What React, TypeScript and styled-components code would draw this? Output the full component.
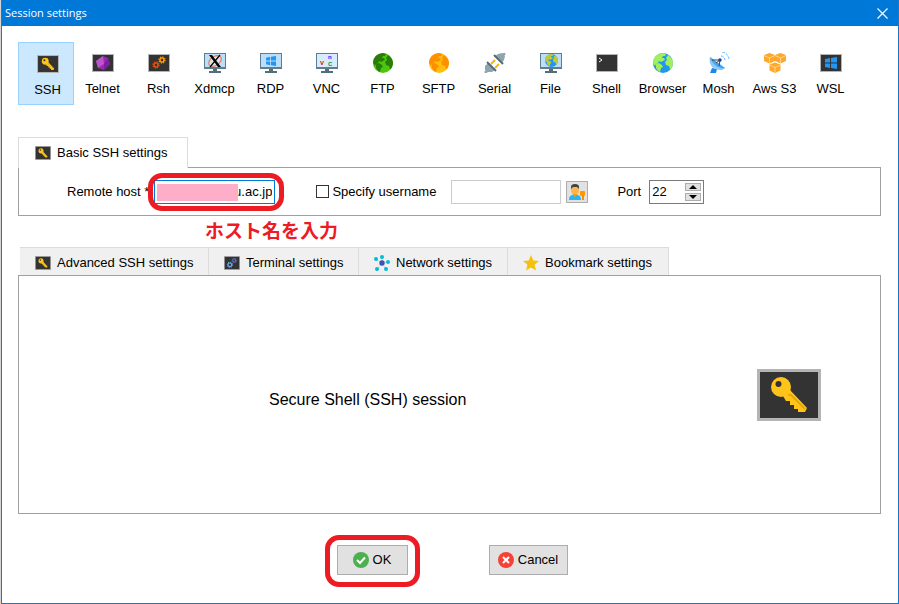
import React, { useState } from "react";
import styled, { createGlobalStyle } from "styled-components";

const GlobalStyle = createGlobalStyle`
  *, *::before, *::after { box-sizing: border-box; }
  body {
    margin: 0;
    background: #d4d4d4;
    color: #000;
    font: 13px/16px "Liberation Sans", Arial, sans-serif;
  }
  button, input { font: inherit; color: inherit; margin: 0; }
  svg { display: block; flex: none; }
`;

const Window = styled.div`
  display: flex;
  flex-direction: column;
  min-height: 100vh;
  margin-left: 1px;
  border: 1px solid #1979ca;
  border-top: 0;
  background: #fff;
`;

const TitleBar = styled.header`
  display: flex;
  align-items: center;
  justify-content: space-between;
  height: 26px;
  padding: 0 8px 0 3px;
  background: #0078d7;
  color: #fff;
`;

const Title = styled.h1`
  margin: 0;
  font: 400 11px/16px "Open Sans", "Noto Sans", sans-serif;
`;

const CloseButton = styled.button`
  padding: 2px;
  border: 0;
  background: none;
`;

const Toolbar = styled.nav`
  display: flex;
  padding: 16px 16px 0;
`;

const ToolButton = styled.button<{ $selected?: boolean }>`
  display: flex;
  flex-direction: column;
  align-items: center;
  gap: 8px;
  width: 56px;
  height: 63px;
  padding: ${(p) => (p.$selected ? "11px 0 0 3px" : "10px 0 0 1px")};
  border: 1px solid ${(p) => (p.$selected ? "#99d1ff" : "transparent")};
  background: ${(p) => (p.$selected ? "#cce8ff" : "transparent")};
  white-space: nowrap;
`;

const ToolIcon = styled.span`
  display: flex;
  align-items: center;
  justify-content: center;
  width: 22px;
  height: 20px;
`;

const Main = styled.main`
  display: flex;
  flex: 1;
  flex-direction: column;
  padding: 32px 17px 0 16px;
`;

const BasicTab = styled.button`
  position: relative;
  z-index: 1;
  display: flex;
  align-items: center;
  align-self: flex-start;
  gap: 6px;
  height: 31px;
  margin-bottom: -1px;
  padding: 0 19px 0 16px;
  border: 1px solid #dcdcdc;
  border-bottom: 0;
  background: #fff;
`;

const BasicPanel = styled.section`
  display: flex;
  align-items: center;
  height: 49px;
  padding-left: 48px;
  border: 1px solid #a0a0a0;
`;

const Field = styled.div`
  display: flex;
  align-items: center;
  gap: 8px;
`;

const HostField = styled(Field)`
  gap: 5px;
`;

const HostBox = styled.div`
  position: relative;
`;

const HostInput = styled.input`
  display: block;
  width: 121px;
  height: 24px;
  padding: 0 2px;
  border: 1px solid #0078d7;
  outline: 0;
  background: #fff;
  text-align: right;
`;

const Redaction = styled.span`
  position: absolute;
  top: 4px;
  left: 3px;
  width: 81px;
  height: 17px;
  background: #ffaec9;
`;

const Ring = styled.span<{ $inset: string }>`
  position: absolute;
  inset: ${(p) => p.$inset};
  border: 5px solid #ed1c24;
  border-radius: 14px;
  pointer-events: none;
`;

const UserField = styled(Field)`
  gap: 5px;
  margin-left: 41px;
`;

const CheckLabel = styled.label`
  display: flex;
  align-items: center;
  gap: 3px;
  width: 130px;
  white-space: nowrap;
`;

const Checkbox = styled.input`
  flex: none;
  width: 13px;
  height: 13px;
  border: 1px solid #333;
  background: #fff;
  appearance: none;
  &:checked { box-shadow: inset 0 0 0 2px #fff; background: #333; }
`;

const UserInput = styled.input`
  width: 110px;
  height: 24px;
  padding: 0 3px;
  border: 1px solid #ccc;
  background: #fff;
`;

const UserButton = styled.button`
  display: flex;
  align-items: center;
  justify-content: center;
  width: 22px;
  height: 22px;
  padding: 0;
  border: 1px solid #adadad;
  background: #e1e1e1;
`;

const PortField = styled(Field)`
  margin-left: 29px;
`;

const PortBox = styled.div`
  display: flex;
  align-items: center;
  width: 55px;
  height: 24px;
  padding-right: 2px;
  border: 1px solid #7a7a7a;
`;

const PortInput = styled.input`
  flex: 1;
  min-width: 0;
  height: 20px;
  padding: 0 2px;
  border: 0;
  outline: 0;
  background: none;
`;

const Spinner = styled.div`
  display: flex;
  flex-direction: column;
  gap: 2px;
`;

const SpinButton = styled.button`
  display: flex;
  align-items: center;
  justify-content: center;
  width: 16px;
  height: 8px;
  padding: 0;
  border: 1px solid #adadad;
  background: #e1e1e1;
`;

const Note = styled.p`
  margin: 2px 0 0 187px;
  color: #ed1c24;
  font: 700 19px/24px "Noto Sans CJK JP", sans-serif;
`;

const TabRow = styled.div`
  display: grid;
  grid-template-columns: 189px 150px 149px 161px;
  height: 28px;
  margin: 5px 0 0 2px;
`;

const Tab = styled.button`
  display: flex;
  align-items: center;
  gap: 6px;
  padding: 2px 0 0 15px;
  border: 1px solid #dcdcdc;
  border-width: 1px 1px 0 0;
  background: #f0f0f0;
  white-space: nowrap;
`;

const SessionPanel = styled.section`
  display: flex;
  flex: 1;
  align-items: center;
  justify-content: space-between;
  padding: 0 59px 0 250px;
  border: 1px solid #a0a0a0;
`;

const SessionText = styled.p`
  margin: 0;
  padding-top: 10px;
  font-size: 16px;
  line-height: 20px;
`;

const Footer = styled.footer`
  display: flex;
  align-items: flex-start;
  justify-content: center;
  gap: 81px;
  height: 89px;
  padding: 31px 0 0 4px;
`;

const ButtonBox = styled.div`
  position: relative;
`;

const DialogButton = styled.button<{ $width: number }>`
  display: flex;
  align-items: center;
  justify-content: center;
  gap: 4px;
  width: ${(p) => p.$width}px;
  height: 30px;
  padding: 0;
  border: 1px solid #adadad;
  background: #e1e1e1;
`;

const KeyIcon = ({ width, height }: { width: number; height: number }) => (
  <svg width={width} height={height} viewBox="0 0 64 52" preserveAspectRatio="none" aria-hidden>
    <rect width="64" height="52" fill="#b4b4b4" />
    <rect x="3" y="3" width="58" height="46" fill="#333" />
    <path d="M26 27L33 21 50 39 48 43H41V40H37V36H33V32H29Z" fill="#ffc31a" />
    <circle cx="24" cy="18" r="10" fill="#ffc31a" />
    <path d="M31 26L34 26 48 40" fill="none" stroke="#e0a106" strokeWidth="1.6" />
    <circle cx="21.5" cy="15" r="3" fill="#333" />
  </svg>
);

const Screen = ({ children }: { children?: React.ReactNode }) => (
  <svg width="22" height="20" viewBox="0 0 22 20" aria-hidden>
    <rect y="1" width="22" height="18" fill="#b4b4b4" />
    <rect x="1" y="2" width="20" height="16" fill="#333" />
    {children}
  </svg>
);

const Monitor = ({ children }: { children?: React.ReactNode }) => (
  <svg width="22" height="20" viewBox="0 0 22 20" aria-hidden>
    <path d="M0 0H22V16H0Z" fill="#607d8b" />
    <path d="M1 1H21V14H1Z" fill="#bbdefb" />
    <path d="M9 16H13V18H17V20H5V18H9Z" fill="#546e7a" />
    {children}
  </svg>
);

const Gear = ({ x, y, r, color }: { x: number; y: number; r: number; color: string }) => (
  <g transform={`translate(${x} ${y})`} fill="none" stroke={color}>
    <circle r={r} strokeWidth="1.5" />
    <circle r={r + 1} strokeWidth="1.4" strokeDasharray={`${(r + 1) * 0.393} ${(r + 1) * 0.393}`} />
  </g>
);

const GlobeShape = ({ sea, land }: { sea: string; land: string }) => (
  <>
    <circle cx="10" cy="10" r="10" fill={sea} />
    <path
      d="M4 2C6 1 8 0 10 0L13 1 12 3 10 3 9 5 11 5 12 7 10 8 8 9 6 8 5 10 3 11 2 13 0 10C0 7 1 4 4 2ZM3 11L6 10 9 12 10 14 8 15 7 19C5 18 4 17 3 15ZM15 2C18 4 20 7 20 10C20 12 19 14 18 16L17 16 16 13 13 12 12 9 14 7 13 5Z"
      fill={land}
    />
  </>
);

const Globe = (p: { sea: string; land: string }) => (
  <svg width="20" height="20" viewBox="0 0 20 20" aria-hidden>
    <GlobeShape {...p} />
  </svg>
);

const WindowsLogo = ({ x, y, size }: { x: number; y: number; size: number }) => (
  <svg x={x} y={y} width={size} height={size} viewBox="0 0 12 12">
    <path d="M0 2L5 1V5.5H0ZM6 1L12 0V5.5H6ZM0 6.5H5V11L0 10ZM6 6.5H12V12L6 11Z" fill="#2196f3" />
  </svg>
);

const SerialIcon = () => (
  <svg width="22" height="20" viewBox="0 0 22 20" aria-hidden>
    <path d="M1 20L4 17M18 3L21 0" stroke="#90a4ae" strokeWidth="2.5" />
    <path d="M4 10L11 17 8 19 3 19 1 17 1 13Z" fill="#90a4ae" />
    <path d="M11 3L18 10 20 7 21 3 18 0 14 1Z" fill="#90a4ae" />
    <path d="M3 9L12 18M10 2L19 11" stroke="#546e7a" strokeWidth="2" />
    <path d="M7 11L11 7M11 15L15 11" stroke="#ffb300" strokeWidth="2" />
  </svg>
);

const MoshIcon = () => (
  <svg width="22" height="22" viewBox="0 0 22 22" aria-hidden>
    <path d="M4 16L9 17 8 21H2Z" fill="#1e88e5" />
    <path d="M2 5C0 11 4 19 14 18L17 16Z" fill="#90caf9" />
    <path d="M2 5L17 16C13 18 3 12 2 5Z" fill="#42a5f5" />
    <path d="M4 8L12 8 11 14M12 8L8 11" fill="none" stroke="#37474f" />
    <circle cx="12" cy="8" r="1.7" fill="#0d47a1" />
    <path d="M13 4Q16 4 17 8M14 0Q20 1 21 7" fill="none" stroke="#64b5f6" strokeDasharray="3 1" />
  </svg>
);

const Cube = ({ x, y }: { x: number; y: number }) => (
  <g transform={`translate(${x} ${y})`}>
    <path d="M5.5 0L11 2V8L5.5 10.5 0 8V2Z" fill="#ffa726" />
    <path d="M0 2.5L5.5 5 11 2.5M5.5 5V10" fill="none" stroke="#ffe0b2" strokeWidth="0.8" />
  </g>
);

const AwsIcon = () => (
  <svg width="22" height="20" viewBox="0 0 22 20" aria-hidden>
    <Cube x={0} y={0} />
    <Cube x={11} y={0} />
    <Cube x={5.5} y={9.5} />
  </svg>
);

const XLogo = () => (
  <Monitor>
    <circle cx="11" cy="8" r="6" fill="#dfe6ea" />
    <ellipse cx="11" cy="8" rx="7" ry="4.5" transform="rotate(-35 11 8)" fill="none" stroke="#e77a55" strokeWidth="1.2" />
    <path d="M5 2H8L17 14H14Z" fill="#000" />
    <path d="M16 2L6 14" stroke="#000" strokeWidth="1.2" />
  </Monitor>
);

const VncIcon = () => (
  <Monitor>
    <path d="M1 1H21V14H1Z" fill="#d6ecfd" />
    <g fontFamily="Liberation Sans" fontSize="6" fontWeight="700">
      <text x="4" y="12" fill="#e00000">V</text>
      <text x="12" y="6" fill="#1a1aff">n</text>
      <text x="12" y="13" fill="#009030">C</text>
    </g>
  </Monitor>
);

const sessions: { name: string; icon: React.ReactNode }[] = [
  { name: "SSH", icon: <KeyIcon width={22} height={18} /> },
  {
    name: "Telnet",
    icon: (
      <Screen>
        <path d="M11 3L16 5 18 11 12 17 6 15 4 8Z" fill="#9c27b0" />
        <path d="M11 3L12 11 6 15 4 8Z" fill="#ba55cc" />
        <path d="M12 11L16 5 18 11 12 17Z" fill="#7b1fa2" />
      </Screen>
    ),
  },
  {
    name: "Rsh",
    icon: (
      <Screen>
        <Gear x={8} y={12} r={2} color="#e65100" />
        <Gear x={14} y={7} r={2} color="#ff9800" />
      </Screen>
    ),
  },
  { name: "Xdmcp", icon: <XLogo /> },
  { name: "RDP", icon: <Monitor><WindowsLogo x={6} y={3} size={10} /></Monitor> },
  { name: "VNC", icon: <VncIcon /> },
  { name: "FTP", icon: <Globe sea="#4cc80c" land="#2a7d0b" /> },
  { name: "SFTP", icon: <Globe sea="#ffc107" land="#ff8f00" /> },
  { name: "Serial", icon: <SerialIcon /> },
  {
    name: "File",
    icon: (
      <Monitor>
        <svg x="5" y="1" width="13" height="13" viewBox="0 0 20 20">
          <GlobeShape sea="#2196f3" land="#c0ca33" />
        </svg>
      </Monitor>
    ),
  },
  { name: "Shell", icon: <Screen><path d="M3 5L6 7 3 9" fill="none" stroke="#fff" /></Screen> },
  { name: "Browser", icon: <Globe sea="#2196f3" land="#9ff05a" /> },
  { name: "Mosh", icon: <MoshIcon /> },
  { name: "Aws S3", icon: <AwsIcon /> },
  { name: "WSL", icon: <Screen><WindowsLogo x={5} y={4} size={12} /></Screen> },
];

const TerminalIcon = () => (
  <svg width="16" height="14" viewBox="0 0 22 19" aria-hidden>
    <rect width="22" height="19" fill="#b4b4b4" />
    <rect x="1" y="1" width="20" height="17" fill="#333" />
    <Gear x={8} y={12} r={2.5} color="#64b5f6" />
    <Gear x={14} y={6} r={2} color="#5c6bc0" />
  </svg>
);

const NetworkIcon = () => (
  <svg width="16" height="16" viewBox="0 0 16 16" aria-hidden>
    <path d="M8 8V2M8 8L2 4M8 8L3 14M8 8L12 14M8 8L14 7" stroke="#cfd8dc" />
    <circle cx="8" cy="8" r="2.7" fill="#3f51b5" />
    <g fill="#00bcd4">
      <circle cx="8" cy="2" r="2" />
      <circle cx="2" cy="4" r="2" />
      <circle cx="14" cy="7" r="2" />
      <circle cx="3" cy="14" r="2" />
      <circle cx="12" cy="14" r="2" />
    </g>
  </svg>
);

const StarIcon = () => (
  <svg width="16" height="16" viewBox="0 0 16 16" aria-hidden>
    <path d="M8 0L10.3 5.5 16 6 11.6 9.8 13 15.5 8 12.4 3 15.5 4.4 9.8 0 6 5.7 5.5Z" fill="#f4c20d" />
  </svg>
);

const UserKeyIcon = () => (
  <svg width="18" height="18" viewBox="0 0 18 18" aria-hidden>
    <path d="M1 17C1 13 3 12 7 11C11 12 13 13 13 17Z" fill="#29b6f6" />
    <path d="M5 9H9V12L7 14 5 12Z" fill="#ff9800" />
    <rect x="3" y="3" width="8" height="8" rx="3" fill="#ffb74d" />
    <path d="M3 6V4Q3 1 7 1Q11 1 11 4V6L9 4H5Z" fill="#424242" />
    <rect x="12" y="8" width="5" height="5" rx="1" fill="#ff9800" />
    <path d="M14 12H16V17H14Z" fill="#fb8c00" />
  </svg>
);

const settingsTabs = [
  { name: "Advanced SSH settings", icon: <KeyIcon width={16} height={14} /> },
  { name: "Terminal settings", icon: <TerminalIcon /> },
  { name: "Network settings", icon: <NetworkIcon /> },
  { name: "Bookmark settings", icon: <StarIcon /> },
];

export default function App() {
  const [selected, setSelected] = useState("SSH");
  const [host, setHost] = useState("u.ac.jp");
  const [port, setPort] = useState(22);

  return (
    <>
      <GlobalStyle />
      <Window>
        <TitleBar>
          <Title>Session settings</Title>
          <CloseButton aria-label="Close">
            <svg width="11" height="11" viewBox="0 0 11 11" aria-hidden>
              <path d="M0.5 0.5L10.5 10.5M10.5 0.5L0.5 10.5" stroke="#fff" strokeWidth="1.2" />
            </svg>
          </CloseButton>
        </TitleBar>
        <Toolbar aria-label="Session type">
          {sessions.map((s) => (
            <ToolButton key={s.name} $selected={s.name === selected} onClick={() => setSelected(s.name)}>
              <ToolIcon>{s.icon}</ToolIcon>
              {s.name}
            </ToolButton>
          ))}
        </Toolbar>
        <Main>
          <BasicTab>
            <KeyIcon width={16} height={14} />
            Basic SSH settings
          </BasicTab>
          <BasicPanel>
            <HostField>
              <label htmlFor="host">Remote host *</label>
              <HostBox>
                <HostInput id="host" value={host} onChange={(e) => setHost(e.target.value)} />
                <Redaction />
                <Ring $inset="-7px -9px -7px -6px" />
              </HostBox>
            </HostField>
            <UserField>
              <CheckLabel>
                <Checkbox type="checkbox" />
                Specify username
              </CheckLabel>
              <UserInput aria-label="Username" />
              <UserButton aria-label="Manage users"><UserKeyIcon /></UserButton>
            </UserField>
            <PortField>
              <label htmlFor="port">Port</label>
              <PortBox>
                <PortInput id="port" value={port} onChange={(e) => setPort(Number(e.target.value) || 0)} />
                <Spinner>
                  <SpinButton aria-label="Increase port" onClick={() => setPort(port + 1)}>
                    <svg width="8" height="4" viewBox="0 0 8 4" aria-hidden><path d="M0 4L4 0 8 4Z" /></svg>
                  </SpinButton>
                  <SpinButton aria-label="Decrease port" onClick={() => setPort(port - 1)}>
                    <svg width="8" height="4" viewBox="0 0 8 4" aria-hidden><path d="M0 0L4 4 8 0Z" /></svg>
                  </SpinButton>
                </Spinner>
              </PortBox>
            </PortField>
          </BasicPanel>
          <Note lang="ja">ホスト名を入力</Note>
          <TabRow>
            {settingsTabs.map((t) => (
              <Tab key={t.name}>
                {t.icon}
                {t.name}
              </Tab>
            ))}
          </TabRow>
          <SessionPanel>
            <SessionText>Secure Shell (SSH) session</SessionText>
            <KeyIcon width={64} height={52} />
          </SessionPanel>
        </Main>
        <Footer>
          <ButtonBox>
            <DialogButton $width={71}>
              <svg width="16" height="16" viewBox="0 0 16 16" aria-hidden>
                <circle cx="8" cy="8" r="8" fill="#4caf50" />
                <path d="M4 8L7 11 12 5.5" fill="none" stroke="#fff" strokeWidth="2" />
              </svg>
              OK
            </DialogButton>
            <Ring $inset="-10px -12px -12px" />
          </ButtonBox>
          <DialogButton $width={79}>
            <svg width="16" height="16" viewBox="0 0 16 16" aria-hidden>
              <circle cx="8" cy="8" r="8" fill="#f44336" />
              <path d="M5 5L11 11M11 5L5 11" stroke="#fff" strokeWidth="2" />
            </svg>
            Cancel
          </DialogButton>
        </Footer>
      </Window>
    </>
  );
}
